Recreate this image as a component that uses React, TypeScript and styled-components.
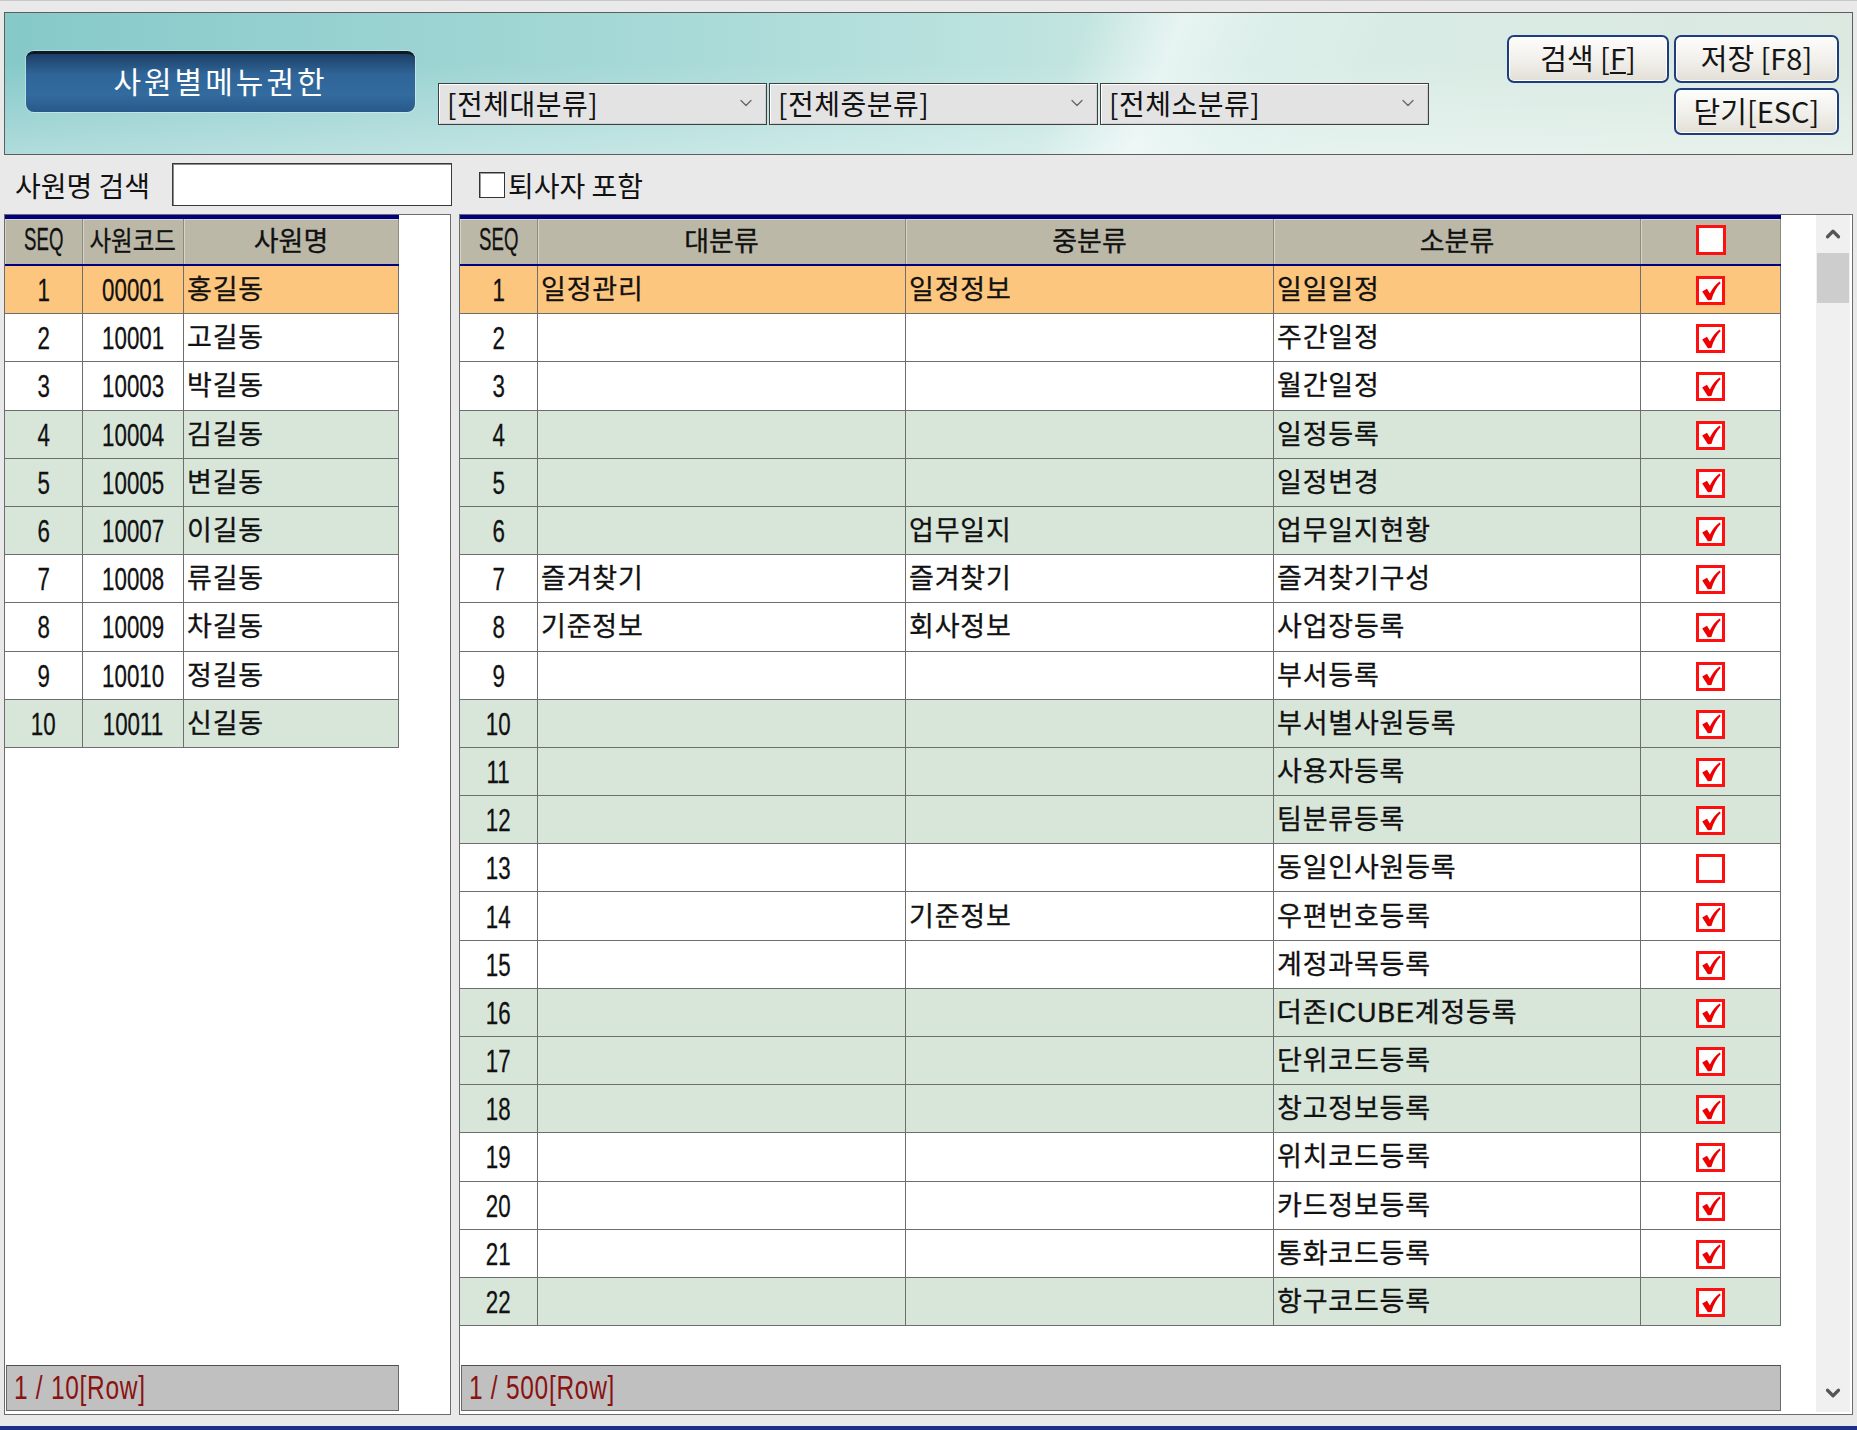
import { FC } from 'react';
import styled, { createGlobalStyle } from 'styled-components';
import { ChevronDown, ChevronUp } from 'lucide-react';

const KR = `"Noto Sans CJK KR", "Noto Sans", sans-serif`;
const MIXED = `"Liberation Sans", "Noto Sans CJK KR", sans-serif`;

type Tone = 'sel' | 'white' | 'green';
const toneColor: Record<Tone, string> = {
  sel: '#fdc67e',
  white: '#ffffff',
  green: '#d8e6da',
};

const employees = [
  ['1', '00001', '홍길동'],
  ['2', '10001', '고길동'],
  ['3', '10003', '박길동'],
  ['4', '10004', '김길동'],
  ['5', '10005', '변길동'],
  ['6', '10007', '이길동'],
  ['7', '10008', '류길동'],
  ['8', '10009', '차길동'],
  ['9', '10010', '정길동'],
  ['10', '10011', '신길동'],
];

type Menu = [string, string, string, boolean];
const menus: Menu[] = [
  ['일정관리', '일정정보', '일일일정', true],
  ['', '', '주간일정', true],
  ['', '', '월간일정', true],
  ['', '', '일정등록', true],
  ['', '', '일정변경', true],
  ['', '업무일지', '업무일지현황', true],
  ['즐겨찾기', '즐겨찾기', '즐겨찾기구성', true],
  ['기준정보', '회사정보', '사업장등록', true],
  ['', '', '부서등록', true],
  ['', '', '부서별사원등록', true],
  ['', '', '사용자등록', true],
  ['', '', '팀분류등록', true],
  ['', '', '동일인사원등록', false],
  ['', '기준정보', '우편번호등록', true],
  ['', '', '계정과목등록', true],
  ['', '', '더존ICUBE계정등록', true],
  ['', '', '단위코드등록', true],
  ['', '', '창고정보등록', true],
  ['', '', '위치코드등록', true],
  ['', '', '카드정보등록', true],
  ['', '', '통화코드등록', true],
  ['', '', '항구코드등록', true],
];

const LEFT_COLS = '78px 101px 215px';
const RIGHT_COLS = '78px 368px 368px 367px 140px';

const toneOf = (i: number): Tone => (i === 0 ? 'sel' : Math.floor(i / 3) % 2 === 0 ? 'white' : 'green');

const GlobalStyle = createGlobalStyle`
  html, body { margin: 0; padding: 0; background: #e9e9e9; }
  * { box-sizing: border-box; }
`;

const Window = styled.div`
  width: 1857px;
  height: 1430px;
  padding-top: 11px;
  background: #e9e9e9;
  border-top: 1px solid #c8c8c8;
  border-bottom: 4px solid #1d2f86;
  display: flex;
  flex-direction: column;
  overflow: hidden;
`;

// the old grid font is tall and narrow, so squeeze latin text / tight headers
const Narrow = styled.span<{ $sx?: number; $origin?: string; $latin?: boolean }>`
  display: inline-block;
  font-family: ${(p) => (p.$latin === false ? KR : '"Liberation Sans", sans-serif')};
  transform: scaleX(${(p) => p.$sx ?? 0.72});
  transform-origin: ${(p) => p.$origin ?? 'center'};
  white-space: nowrap;
  flex-shrink: 0;
`;

const Header = styled.div`
  margin: 0 4px;
  height: 143px;
  border: 1px solid #5e5e5e;
  display: flex;
  align-items: flex-start;
  background:
    linear-gradient(112deg, transparent 0 57%, rgba(255, 255, 255, 0.55) 62%, rgba(255, 255, 255, 0.2) 67%, transparent 73%),
    linear-gradient(180deg, rgba(255, 255, 255, 0) 35%, rgba(255, 255, 255, 0.35) 100%),
    linear-gradient(90deg, #86c9c9 0%, #a6d9d7 35%, #bde3df 55%, #d8ece5 72%, #dbe9e1 100%);
`;

const Title = styled.div`
  margin: 38px 0 0 21px;
  width: 389px;
  height: 61px;
  border-radius: 8px;
  border-top: 3px solid #0d1a26;
  background: linear-gradient(180deg, #1c3f66 0%, #2f6598 35%, #336b9e 70%, #28598a 100%);
  box-shadow: 0 0 0 1px rgba(255, 255, 255, 0.35);
  color: #fff;
  font-family: ${KR};
  font-size: 30px;
  letter-spacing: 3px;
  line-height: 1;
  display: flex;
  align-items: center;
  justify-content: center;
  padding-bottom: 6px;
`;

const Filters = styled.div`
  margin: 70px 0 0 23px;
  display: flex;
  gap: 2px;
`;

const Select = styled.div`
  width: 329px;
  height: 42px;
  border: 1px solid #3f3f3f;
  background: #e3e3e3;
  box-shadow: inset 1px 1px 0 #fff, inset -1px -1px 0 #cfcfcf;
  display: flex;
  align-items: center;
  justify-content: space-between;
  padding: 0 10px 2px 8px;
  font-family: ${KR};
  font-size: 28px;
  letter-spacing: 0.5px;
  line-height: 1;
  color: #111;
`;

const Buttons = styled.div`
  margin: 22px 13px 0 auto;
  display: grid;
  grid-template-columns: 162px 165px;
  grid-template-rows: 48px 47px;
  column-gap: 5px;
  row-gap: 5px;
`;

const Button = styled.button<{ $col?: number }>`
  grid-column: ${(p) => p.$col ?? 'auto'};
  border: 2px solid #1f3d7c;
  border-radius: 7px;
  background: linear-gradient(180deg, #fdfdfb 0%, #f1efea 55%, #e2dfd6 100%);
  box-shadow: inset 0 0 0 1px #ffffff;
  font-family: ${KR};
  font-size: 29px;
  line-height: 1;
  color: #151515;
  padding: 0 0 3px;
  display: flex;
  align-items: center;
  justify-content: center;
`;

const SearchBar = styled.div`
  height: 59px;
  display: flex;
  align-items: center;
  padding-left: 15px;
  font-family: ${KR};
  font-size: 28px;
  line-height: 1;
  color: #111;
`;

const Label = styled.span`
  width: 157px;
`;

const SearchInput = styled.input`
  width: 280px;
  height: 43px;
  border: 1px solid #3a3a3a;
  box-shadow: inset 1px 1px 0 #8a8a8a;
  background: #fff;
  outline: none;
`;

const Check = styled.span`
  margin-left: 27px;
  margin-right: 3px;
  width: 26px;
  height: 26px;
  border: 1px solid #333;
  box-shadow: inset 1px 1px 0 #9a9a9a;
  background: #fff;
`;

const Body = styled.div`
  height: 1201px;
  padding: 0 4px;
  display: flex;
  gap: 8px;
`;

const Panel = styled.div<{ $w: number }>`
  width: ${(p) => p.$w}px;
  height: 100%;
  border: 1px solid #6c6c6c;
  background: #fff;
  display: flex;
`;

const Column = styled.div<{ $w: number }>`
  width: ${(p) => p.$w}px;
  display: flex;
  flex-direction: column;
`;

const Grid = styled.div`
  display: flex;
  flex-direction: column;
`;

const HeadRow = styled.div<{ $cols: string }>`
  display: grid;
  grid-template-columns: ${(p) => p.$cols};
  height: 51px;
  background: #bbb8a8;
  border-top: 4px solid #000080;
  border-bottom: 2px solid #000080;
`;

const HeadCell = styled.div<{ $num?: boolean }>`
  min-width: 0;
  border-right: 1px solid #8e8c80;
  box-shadow: inset 1px 1px 0 #d6d4c8;
  display: flex;
  align-items: center;
  justify-content: center;
  padding-bottom: 4px;
  font-family: ${(p) => (p.$num ? MIXED : KR)};
  font-size: ${(p) => (p.$num ? '31px' : '27px')};
  white-space: nowrap;
  line-height: 1;
  color: #111;
  -webkit-text-stroke: 0.3px #111;
`;

const Row = styled.div<{ $cols: string; $tone: Tone }>`
  display: grid;
  grid-template-columns: ${(p) => p.$cols};
  height: 48.2px;
  background: ${(p) => toneColor[p.$tone]};
  border-bottom: 1px solid #6e6e6e;
`;

const Cell = styled.div<{ $num?: boolean; $center?: boolean }>`
  border-right: 1px solid #6e6e6e;
  display: flex;
  align-items: center;
  justify-content: ${(p) => (p.$center ? 'center' : 'flex-start')};
  padding: ${(p) => (p.$center ? '2px 0 0' : '2px 0 0 3px')};
  font-family: ${MIXED};
  font-size: ${(p) => (p.$num ? '31px' : '27px')};
  letter-spacing: ${(p) => (p.$num ? '0' : '0.8px')};
  line-height: 1;
  color: #111;
  -webkit-text-stroke: 0.3px #111;
  white-space: nowrap;
  overflow: hidden;
`;

const Box = styled.span<{ $size: number }>`
  width: ${(p) => p.$size}px;
  height: ${(p) => p.$size}px;
  border: 3px solid #ff1010;
  background: #fff;
  display: flex;
  align-items: center;
  justify-content: center;
`;

const Spacer = styled.div`
  flex: 1;
`;

const Footer = styled.div`
  height: 46px;
  margin: 0 0 3px 1px;
  background: #c0c0c0;
  border: 1px solid #686868;
  border-top-color: #505050;
  display: flex;
  align-items: center;
  padding: 0 0 2px 7px;
  font-size: 34px;
  letter-spacing: 1px;
  line-height: 1;
  color: #8a1212;
`;

const Scrollbar = styled.div`
  width: 34px;
  margin: 0 2px 2px auto;
  background: #f0f0f0;
  display: flex;
  flex-direction: column;
  align-items: center;
  color: #555;
`;

const Arrow = styled.div`
  height: 38px;
  width: 100%;
  display: flex;
  align-items: center;
  justify-content: center;
`;

const Thumb = styled.div`
  width: 32px;
  height: 50px;
  background: #cdcdcd;
`;

const Tick: FC = () => (
  <svg width="22" height="22" viewBox="0 0 24 24">
    <path
      d="M2.4 12.6 L7.6 9.6 L10.8 14.6 C13.4 9.4 16.8 5 21.4 1.6 L22.6 3.4 C18.2 8 14.8 13.6 12.4 21.8 L8.6 22 Z"
      fill="#ee0000"
    />
  </svg>
);

const RedCheck: FC<{ checked: boolean; size?: number }> = ({ checked, size = 29 }) => (
  <Box $size={size}>{checked && <Tick />}</Box>
);

export default function App() {
  return (
    <>
      <GlobalStyle />
      <Window>
        <Header>
          <Title>사원별메뉴권한</Title>
          <Filters>
            {['[전체대분류]', '[전체중분류]', '[전체소분류]'].map((label) => (
              <Select key={label}>
                <span>{label}</span>
                <ChevronDown size={20} strokeWidth={1.5} color="#666" />
              </Select>
            ))}
          </Filters>
          <Buttons>
            <Button>
              검색 [<u>F</u>]
            </Button>
            <Button>저장 [F8]</Button>
            <Button $col={2}>닫기[ESC]</Button>
          </Buttons>
        </Header>

        <SearchBar>
          <Label>사원명 검색</Label>
          <SearchInput type="text" />
          <Check />
          <span>퇴사자 포함</span>
        </SearchBar>

        <Body>
          <Panel $w={447}>
            <Column $w={394}>
              <Grid>
                <HeadRow $cols={LEFT_COLS}>
                  <HeadCell $num>
                    <Narrow $sx={0.6}>SEQ</Narrow>
                  </HeadCell>
                  <HeadCell>
                    <Narrow $sx={0.87} $latin={false}>
                      사원코드
                    </Narrow>
                  </HeadCell>
                  <HeadCell>사원명</HeadCell>
                </HeadRow>
                {employees.map(([seq, code, name], i) => (
                  <Row key={seq} $cols={LEFT_COLS} $tone={toneOf(i)}>
                    <Cell $num $center>
                      <Narrow>{seq}</Narrow>
                    </Cell>
                    <Cell $num $center>
                      <Narrow>{code}</Narrow>
                    </Cell>
                    <Cell>{name}</Cell>
                  </Row>
                ))}
              </Grid>
              <Spacer />
              <Footer>
                <Narrow $sx={0.72} $origin="left">
                  1 / 10[Row]
                </Narrow>
              </Footer>
            </Column>
          </Panel>

          <Panel $w={1394}>
            <Column $w={1321}>
              <Grid>
                <HeadRow $cols={RIGHT_COLS}>
                  <HeadCell $num>
                    <Narrow $sx={0.6}>SEQ</Narrow>
                  </HeadCell>
                  <HeadCell>대분류</HeadCell>
                  <HeadCell>중분류</HeadCell>
                  <HeadCell>소분류</HeadCell>
                  <HeadCell>
                    <RedCheck checked={false} size={30} />
                  </HeadCell>
                </HeadRow>
                {menus.map(([large, mid, small, checked], i) => (
                  <Row key={i} $cols={RIGHT_COLS} $tone={toneOf(i)}>
                    <Cell $num $center>
                      <Narrow>{i + 1}</Narrow>
                    </Cell>
                    <Cell>{large}</Cell>
                    <Cell>{mid}</Cell>
                    <Cell>{small}</Cell>
                    <Cell $center>
                      <RedCheck checked={checked} />
                    </Cell>
                  </Row>
                ))}
              </Grid>
              <Spacer />
              <Footer>
                <Narrow $sx={0.72} $origin="left">
                  1 / 500[Row]
                </Narrow>
              </Footer>
            </Column>
            <Scrollbar>
              <Arrow>
                <ChevronUp size={22} strokeWidth={3.5} />
              </Arrow>
              <Thumb />
              <Spacer />
              <Arrow>
                <ChevronDown size={22} strokeWidth={3.5} />
              </Arrow>
            </Scrollbar>
          </Panel>
        </Body>
      </Window>
    </>
  );
}
